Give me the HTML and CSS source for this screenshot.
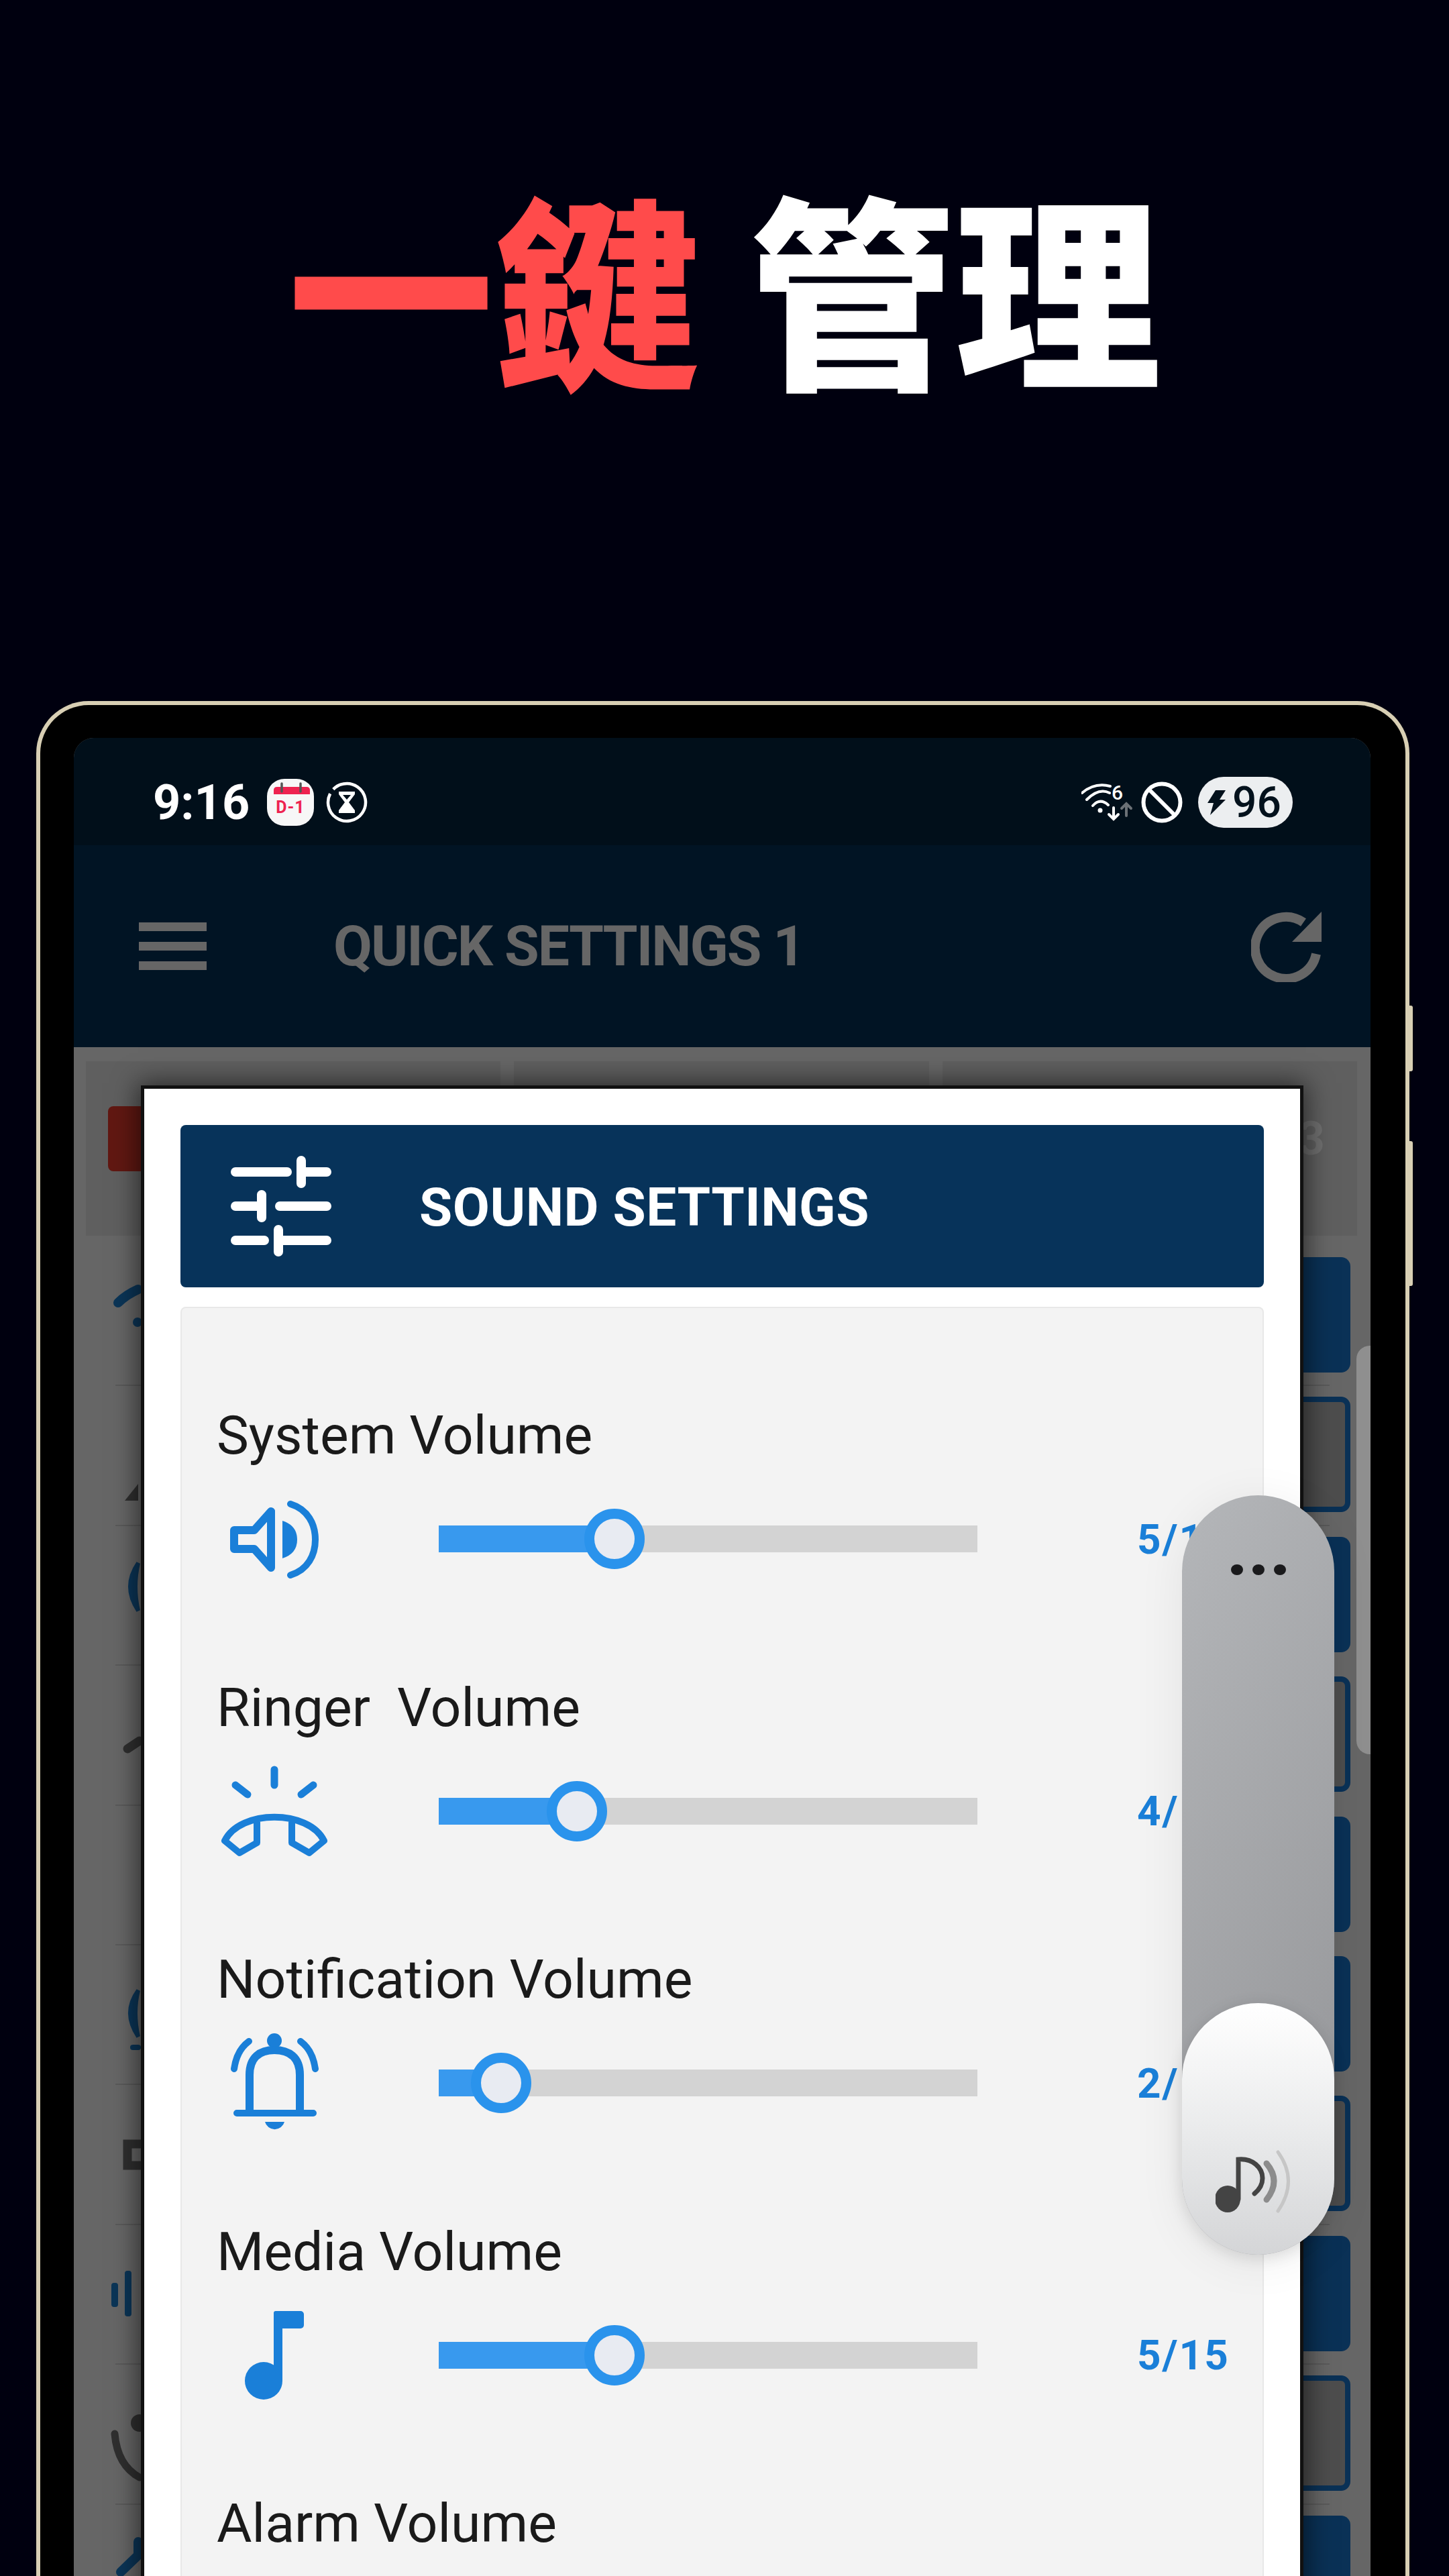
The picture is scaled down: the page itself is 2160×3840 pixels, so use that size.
FILE: index.html
```html
<!DOCTYPE html>
<html lang="zh-Hant">
<head>
<meta charset="utf-8">
<title>一鍵 管理</title>
<link rel="stylesheet" href="styles.css">
</head>
<body>
<header class="hero"><h1 class="hero-title"><span class="hero-red">一鍵</span> 管理</h1></header>
<div class="device">
  <i class="side-key side-key-a"></i><i class="side-key side-key-b"></i>
  <div class="screen">
    <div class="status">
      <div class="status-left">
        <span class="clock">9:16</span>
        <svg class="cal" viewBox="0 0 70 70"><rect width="70" height="70" rx="26" fill="#f7f7f7"/><path d="M10 23V17q0-5 5-5h44q5 0 5 5v6z" fill="#ee2350"/><path d="M22 7v12M50 7v12" stroke="#555" stroke-width="3.5" stroke-linecap="round"/><text x="35" y="51" class="cal-text">D-1</text></svg>
        <svg class="hourglass" viewBox="0 0 62 62"><circle cx="31" cy="31" r="28" fill="none" stroke="#fff" stroke-width="4.5" stroke-dasharray="150 8 18 8" transform="rotate(-100 31 31)"/><path d="M19 15h24v4l-9 12 9 12v4H19v-4l9-12-9-12z" fill="#fff"/><path d="M25 20h12l-6 7z" fill="#020f1a"/></svg>
      </div>
      <div class="status-right">
        <svg class="wifi" viewBox="0 0 78 65" fill="none" stroke="#fff" stroke-linecap="round"><path d="M1 18Q20 2 43 8M8 28Q26 10 42 18M17 37Q28 25 40 36" stroke-width="4"/><circle cx="28" cy="44" r="3.5" fill="#fff" stroke="none"/><text x="45" y="28" class="wifi-six">6</text><path d="M48 40V57M41 50l7 7 7-7" stroke-width="4"/><path d="M67 52V34M60 41l7-7 7 7" stroke="#6b7176" stroke-width="4"/></svg>
        <svg class="block" viewBox="0 0 62 62" fill="none" stroke="#fff" stroke-width="6"><circle cx="31" cy="31" r="27.5"/><path d="M12 12l38 38"/></svg>
        <div class="battery">
          <svg class="bolt" viewBox="0 0 27 37"><path d="M12 0h15l-9 14h9L4 37l5-18H0z" fill="#03111c"/></svg>
          <span>96</span>
        </div>
      </div>
    </div>
    <div class="appbar">
      <div class="burger"><i></i><i></i><i></i></div>
      <div class="app-title">QUICK SETTINGS 1</div>
      <svg class="refresh" viewBox="0 0 107 106" fill="none"><path d="M78 17A46 46 0 1 0 97 64" stroke="#666" stroke-width="14"/><path d="M105 1V46H61z" fill="#666"/></svg>
    </div>
    <div class="tabs">
      <div class="tab"><span class="red-btn"></span></div>
      <div class="tab"></div>
      <div class="tab tab-end"><span class="tab-num">3</span></div>
    </div>
    <div class="list">
      <div class="row"><svg class="frag" viewBox="0 0 100 208"><path d="M66 84Q78 72 96 64" class="fb"/><circle cx="95" cy="113" r="7" class="fbf"/></svg><span class="btn"></span></div>
      <div class="row"><svg class="frag" viewBox="0 0 100 208"><path d="M76 171L96 146V171z" class="fdf"/></svg><span class="btn btn-line"></span></div>
      <div class="row"><svg class="frag" viewBox="0 0 100 208"><path d="M96 55Q72 90 96 126Q88 90 96 55z" class="fbf fbs"/></svg><span class="btn"></span></div>
      <div class="row"><svg class="frag" viewBox="0 0 100 208"><path d="M80 124L98 112" class="fd"/></svg><span class="btn btn-line"></span></div>
      <div class="row"><svg class="frag" viewBox="0 0 100 208"></svg><span class="btn"></span></div>
      <div class="row"><svg class="frag" viewBox="0 0 100 208"><path d="M96 67Q72 100 96 136Q88 100 96 67z" class="fbf fbs"/><rect x="84" y="148" width="16" height="8" rx="4" class="fbf"/></svg><span class="btn"></span></div>
      <div class="row"><svg class="frag" viewBox="0 0 100 208"><path d="M100 88H80V120H100" class="fd"/></svg><span class="btn btn-line"></span></div>
      <div class="row"><svg class="frag" viewBox="0 0 100 208"><rect x="56" y="86" width="10" height="36" rx="4" class="fbf"/><rect x="76" y="68" width="10" height="68" rx="4" class="fbf"/></svg><span class="btn"></span></div>
      <div class="row"><svg class="frag" viewBox="0 0 100 208"><path d="M61 103Q65 150 98 168" class="fd fd-thin"/><circle cx="98" cy="87" r="13" class="fdf"/></svg><span class="btn btn-line"></span></div>
      <div class="row"><svg class="frag" viewBox="0 0 100 208"><path d="M96 55V75L70 100" class="fb"/></svg><span class="btn"></span></div>
    </div>
    <div class="scrollbar"></div>

    <section class="dialog">
      <div class="dlg-head">
        <svg class="dlg-icon" viewBox="0 0 150 150" fill="none" stroke="#fff" stroke-width="14" stroke-linecap="round"><path d="M7 24H84M105 7V41M105 24H143M7 75H46M46 58V92M73 75H143M7 126H50M71 110V143M71 126H143"/></svg>
        <h2 class="dlg-title">SOUND SETTINGS</h2>
      </div>
      <div class="card">
        <div class="vol">
          <div class="vol-label">System Volume</div>
          <div class="vol-ctl">
            <div class="vol-icon"><svg class="ic-speaker" viewBox="0 0 132 121" fill="none" stroke="#1a7fd8" stroke-linejoin="round" stroke-linecap="round"><path d="M6 47H36L61 19V103L36 75H6Z" stroke-width="12"/><path d="M78 33Q100 40 100 61Q100 82 78 89Z" fill="#1a7fd8" stroke="none"/><path d="M90 8C116 16 127 38 127 61C127 84 116 106 90 114" stroke-width="10"/></svg></div>
            <div class="track"><div class="fill" style="width:32.6%"><i class="thumb"></i></div></div>
            <div class="vol-val">5/15</div>
          </div>
        </div>
        <div class="vol">
          <div class="vol-label">Ringer&nbsp; Volume</div>
          <div class="vol-ctl">
            <div class="vol-icon"><svg class="ic-ring" viewBox="0 0 162 136" fill="none" stroke="#1a7fd8" stroke-linejoin="round" stroke-linecap="round"><path d="M81 6V29M23 29L41 43M139 29L121 43" stroke-width="11"/><path d="M55 84V115L29 130L7 112C30 65 132 65 155 112L133 130L107 115V84" stroke-width="10"/></svg></div>
            <div class="track"><div class="fill" style="width:25.7%"><i class="thumb"></i></div></div>
            <div class="vol-val">4/15</div>
          </div>
        </div>
        <div class="vol">
          <div class="vol-label">Notification Volume</div>
          <div class="vol-ctl">
            <div class="vol-icon"><svg class="ic-bell" viewBox="0 0 133 148" fill="none" stroke="#1a7fd8" stroke-linecap="round"><circle cx="66" cy="11" r="11" fill="#1a7fd8" stroke="none"/><path d="M29 119V62C29 35 45 25 66 25C87 25 104 35 104 62V119" stroke-width="12" stroke-linecap="butt"/><path d="M10 119H124M28 12Q10 25 6 53M105 12Q123 25 127 53" stroke-width="10"/><path d="M52 132H81A15 15 0 0 1 52 132Z" fill="#1a7fd8" stroke="none"/></svg></div>
            <div class="track"><div class="fill" style="width:11.6%"><i class="thumb"></i></div></div>
            <div class="vol-val">2/15</div>
          </div>
        </div>
        <div class="vol">
          <div class="vol-label">Media Volume</div>
          <div class="vol-ctl">
            <div class="vol-icon"><svg class="ic-note" viewBox="0 0 88 132" fill="#1a7fd8"><rect x="43" width="45" height="26" rx="5"/><rect x="43" width="13" height="105" rx="3"/><ellipse cx="28" cy="104" rx="28" ry="28"/></svg></div>
            <div class="track"><div class="fill" style="width:32.6%"><i class="thumb"></i></div></div>
            <div class="vol-val">5/15</div>
          </div>
        </div>
        <div class="vol">
          <div class="vol-label">Alarm Volume</div>
        </div>
      </div>
    </section>

    <aside class="panel">
      <div class="dots"><i></i><i></i><i></i></div>
      <div class="knob">
        <svg class="knob-icon" viewBox="0 0 116 98" fill="none"><ellipse cx="18" cy="75" rx="19" ry="20" fill="#444"/><path d="M34 75V16C55 14 70 28 70 44C70 55 64 62 58 67" stroke="#444" stroke-width="7" stroke-linecap="round"/><path d="M76 22Q98 48 76 76" stroke="#8c8c8c" stroke-width="9" stroke-linecap="round"/><path d="M93 5Q124 48 93 93" stroke="#c6c6c6" stroke-width="5" stroke-linecap="round"/></svg>
      </div>
    </aside>
  </div>
</div>
</body>
</html>
```

FILE: styles.css
```css
* { box-sizing: border-box; }
html, body { margin: 0; padding: 0; }
body {
  width: 2160px;
  height: 3840px;
  overflow: hidden;
  background: #00000f;
  font-family: Roboto, "Noto Sans CJK TC", sans-serif;
}
.hero {
  height: 846px;
  display: flex;
  align-items: center;
  justify-content: center;
}
.hero-title {
  margin: 0;
  font-family: "Noto Sans CJK TC", sans-serif;
  font-weight: 900;
  font-size: 308px;
  line-height: 1;
  color: #fff;
  white-space: pre;
}
.hero-red { color: #ff4b4b; }

.device {
  position: relative;
  margin: 199px 0 0 54px;
  width: 2047px;
  height: 2900px;
  padding: 49px 52px 0 50px;
  background: #000;
  border: 6px solid #d8cfb4;
  border-bottom: 0;
  border-radius: 78px 78px 0 0;
}
.side-key {
  position: absolute;
  right: -11px;
  width: 6px;
  background: #d8cfb4;
  border-radius: 0 3px 3px 0;
}
.side-key-a { top: 448px; height: 98px; }
.side-key-b { top: 650px; height: 216px; }

.screen {
  position: relative;
  width: 1933px;
  height: 2800px;
  background: #666;
  border-radius: 30px 30px 0 0;
  overflow: hidden;
}
.status {
  height: 160px;
  padding: 32px 116px 0 118px;
  background: #010f1a;
  display: flex;
  align-items: center;
  justify-content: space-between;
}
.status-left { display: flex; align-items: center; }
.clock { font-size: 72px; font-weight: 700; color: #fff; width: 170px; }
.cal { width: 70px; height: 70px; }
.cal-text { font: 700 25px Roboto, sans-serif; fill: #ee2350; text-anchor: middle; letter-spacing: 1px; }
.hourglass { width: 62px; height: 62px; margin-left: 18px; }
.status-right { display: flex; align-items: center; }
.wifi { width: 78px; height: 65px; }
.wifi-six { font: 500 30px Roboto, sans-serif; fill: #fff; stroke: none; }
.block { width: 62px; height: 62px; margin-left: 11px; }
.battery {
  width: 141px;
  height: 76px;
  margin-left: 23px;
  padding-left: 14px;
  border-radius: 38px;
  background: #eceef0;
  color: #03111c;
  display: flex;
  align-items: center;
  gap: 10px;
  font-size: 64px;
  font-weight: 500;
}
.bolt { width: 27px; height: 37px; }

.appbar {
  height: 301px;
  background: #011424;
  display: flex;
  align-items: center;
  padding: 0 71px 0 97px;
}
.burger { width: 101px; display: flex; flex-direction: column; gap: 16px; }
.burger i { display: block; height: 13px; background: #666; }
.app-title {
  margin-left: 189px;
  font-size: 84px;
  font-weight: 700;
  letter-spacing: -2px;
  color: #666;
  flex: 1;
}
.refresh { width: 107px; height: 106px; }

.tabs {
  display: grid;
  grid-template-columns: repeat(3, 1fr);
  gap: 20px;
  padding: 21px 20px 16px 18px;
}
.tab {
  height: 260px;
  padding: 0 48px 30px 33px;
  background: #5f5f5f;
  display: flex;
  align-items: center;
}
.tab-end { justify-content: flex-end; }
.red-btn { width: 300px; height: 97px; border-radius: 8px; background: #611812; }
.tab-num { font-size: 70px; font-weight: 700; color: #6f6f6f; }

.row {
  height: 208.4px;
  display: flex;
  justify-content: space-between;
  align-items: flex-start;
  padding-right: 30px;
  background: linear-gradient(#5a5a5a, #5a5a5a) 62px 100% / 1810px 2px no-repeat;
}
.frag { width: 100px; height: 208px; flex: none; overflow: visible; }
.fb { fill: none; stroke: #0b3557; stroke-width: 14; stroke-linecap: round; }
.fbf { fill: #0b3557; }
.fbs { stroke: #0b3557; stroke-width: 6; }
.fd { fill: none; stroke: #2f2f2f; stroke-width: 13; stroke-linecap: round; }
.fd-thin { stroke-width: 11; }
.fdf { fill: #2f2f2f; }
.btn {
  margin-top: 16px;
  width: 100px;
  height: 172px;
  border-radius: 14px;
  background: #0a3156;
}
.btn-line { background: #4d4d4d; border: 8px solid #0a3156; }
.scrollbar {
  position: absolute;
  left: 1912px;
  top: 906px;
  width: 30px;
  height: 609px;
  border-radius: 20px 0 0 20px;
  background: #8f8f8f;
}

.dialog {
  position: absolute;
  left: 100px;
  top: 518px;
  width: 1733px;
  height: 2400px;
  padding: 54px 54px 0;
  background: #fff;
  border: 5px solid #111;
  box-shadow: 0 0 36px 4px rgba(0, 0, 0, .58);
}
.dlg-head {
  height: 242px;
  padding-left: 75px;
  background: #07335a;
  border-radius: 8px;
  display: flex;
  align-items: center;
}
.dlg-icon { width: 150px; height: 150px; }
.dlg-title {
  margin: 4px 0 0 131px;
  font-size: 80px;
  font-weight: 700;
  letter-spacing: .5px;
  color: #fff;
}
.card {
  margin-top: 29px;
  height: 2100px;
  padding: 140px 52px 0;
  background: #f3f3f3;
  border: 2px solid #e8e8e8;
  border-radius: 8px;
}
.vol { height: 405.5px; }
.vol-label {
  height: 104px;
  font-size: 80.6px;
  line-height: 100px;
  color: #1a1a1a;
  white-space: nowrap;
}
.vol-ctl {
  height: 200px;
  display: flex;
  align-items: center;
}
.vol-icon {
  flex: none;
  width: 172px;
  display: flex;
  justify-content: center;
}
.ic-speaker { width: 132px; height: 121px; }
.ic-ring { width: 162px; height: 136px; }
.ic-bell { width: 133px; height: 148px; }
.ic-note { width: 88px; height: 132px; }
.track {
  flex: none;
  margin-left: 159px;
  width: 803px;
  height: 40px;
  background: #d3d3d3;
}
.fill { position: relative; height: 100%; background: #3899ee; }
.thumb {
  position: absolute;
  right: -45px;
  top: -25px;
  width: 90px;
  height: 90px;
  border-radius: 50%;
  background: #e8ebf2;
  border: 15px solid #2a93ec;
}
.vol-val {
  margin-left: 238px;
  font-size: 62px;
  font-weight: 700;
  letter-spacing: 2px;
  color: #1a7fd8;
  white-space: nowrap;
}

.panel {
  position: absolute;
  left: 1652px;
  top: 1129px;
  width: 227px;
  height: 1132px;
  border-radius: 114px;
  background: linear-gradient(120deg, #b4b6b9, #939497);
  box-shadow: 0 10px 70px rgba(0, 0, 0, .07);
  display: flex;
  flex-direction: column;
  justify-content: space-between;
}
.dots {
  margin-top: 103px;
  display: flex;
  justify-content: center;
  gap: 14px;
}
.dots i { width: 18px; height: 16px; border-radius: 50%; background: #1a1a1c; }
.knob {
  height: 375px;
  padding: 0 12px 60px 0;
  border-radius: 114px;
  background: linear-gradient(#fff, #e8e9ea 55%, #d4d5d7);
  box-shadow: 0 4px 24px rgba(0, 0, 0, .12);
  display: flex;
  align-items: flex-end;
  justify-content: center;
}
.knob-icon { width: 116px; height: 98px; }
```
